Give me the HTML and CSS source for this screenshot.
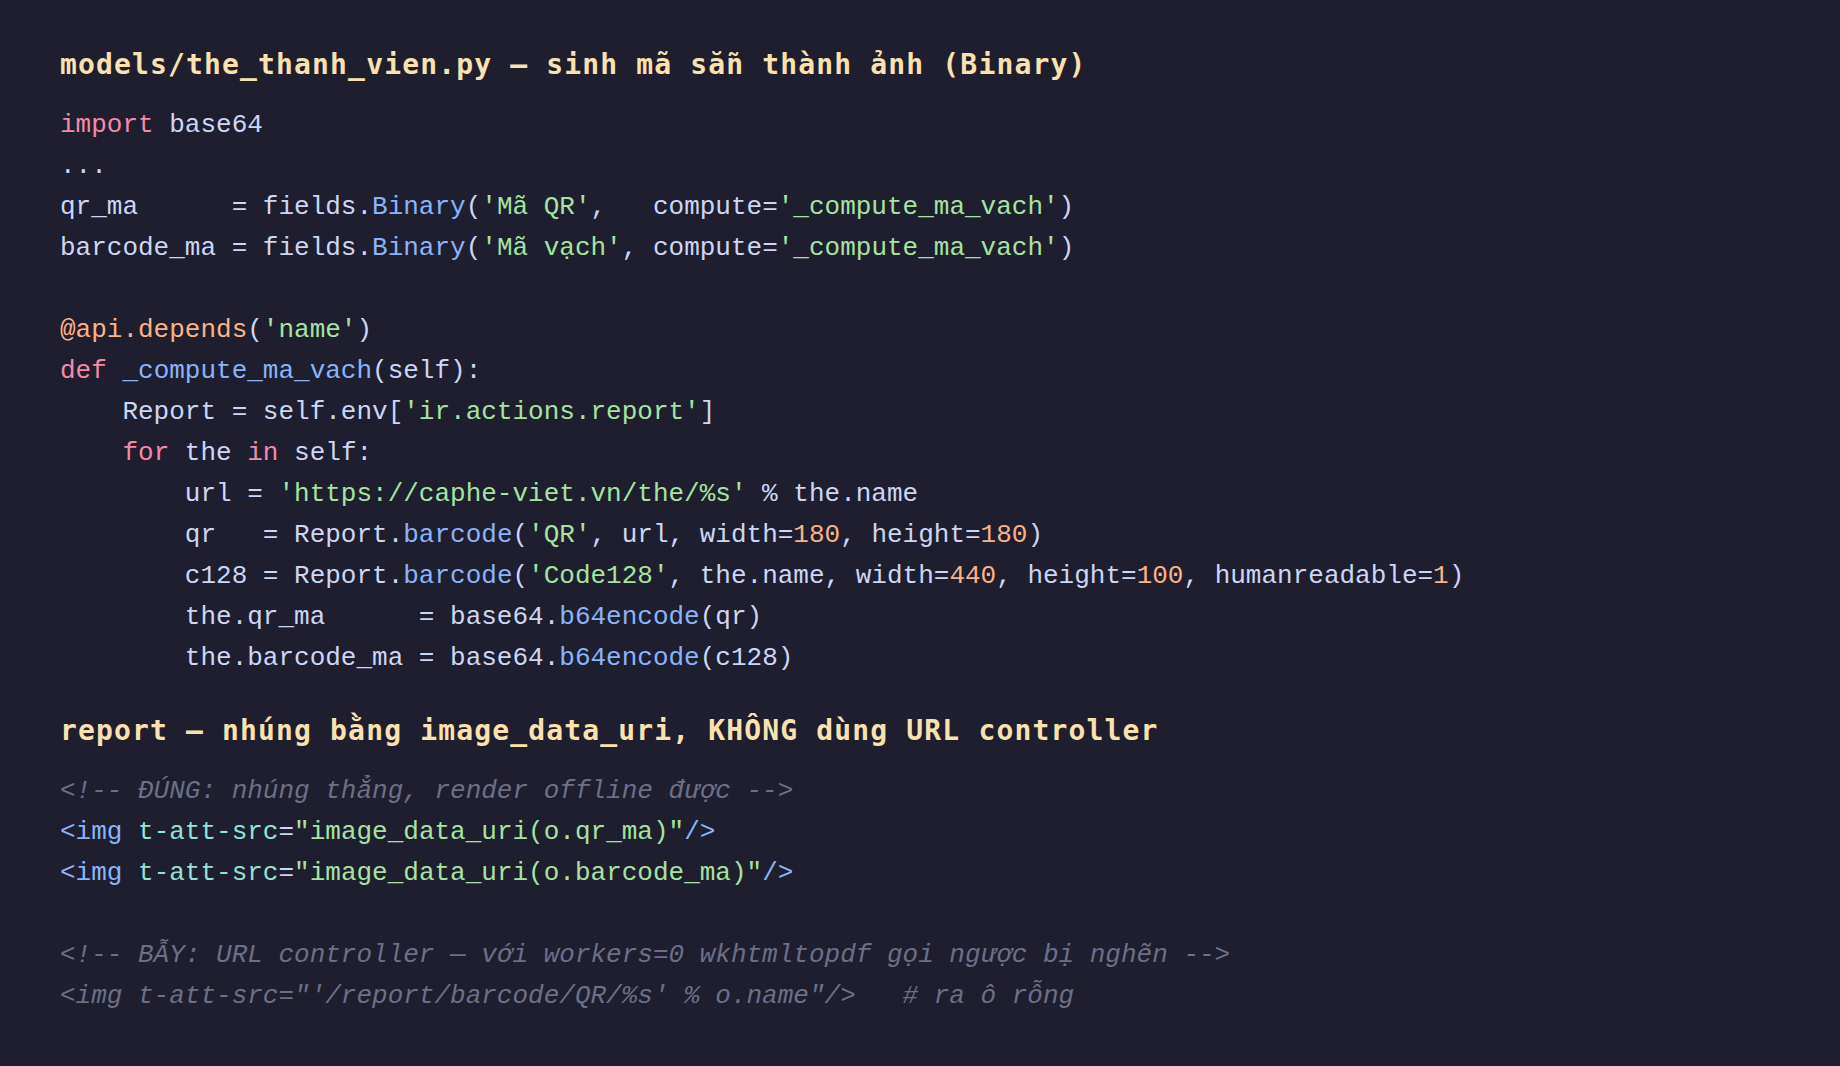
FILE: index.html
```html
<!DOCTYPE html>
<html lang="vi">
<head>
<meta charset="utf-8">
<title>the_thanh_vien</title>
<link rel="stylesheet" href="styles.css">
</head>
<body>
<main class="doc">
<h2 class="title">models/the_thanh_vien.py — sinh mã sẵn thành ảnh (Binary)</h2>
<pre class="code"><span class="kw">import</span> base64
...
qr_ma      = fields.<span class="fn">Binary</span>(<span class="str">'Mã QR'</span>,   compute=<span class="str">'_compute_ma_vach'</span>)
barcode_ma = fields.<span class="fn">Binary</span>(<span class="str">'Mã vạch'</span>, compute=<span class="str">'_compute_ma_vach'</span>)

<span class="deco">@api.depends</span>(<span class="str">'name'</span>)
<span class="kw">def</span> <span class="fn">_compute_ma_vach</span>(self):
    Report = self.env[<span class="str">'ir.actions.report'</span>]
    <span class="kw">for</span> the <span class="kw">in</span> self:
        url = <span class="str">'https://caphe-viet.vn/the/%s'</span> % the.name
        qr   = Report.<span class="fn">barcode</span>(<span class="str">'QR'</span>, url, width=<span class="num">180</span>, height=<span class="num">180</span>)
        c128 = Report.<span class="fn">barcode</span>(<span class="str">'Code128'</span>, the.name, width=<span class="num">440</span>, height=<span class="num">100</span>, humanreadable=<span class="num">1</span>)
        the.qr_ma      = base64.<span class="fn">b64encode</span>(qr)
        the.barcode_ma = base64.<span class="fn">b64encode</span>(c128)</pre>
<h2 class="title">report — nhúng bằng image_data_uri, KHÔNG dùng URL controller</h2>
<pre class="code"><span class="cm">&lt;!-- ĐÚNG: nhúng thẳng, render offline được --&gt;</span>
<span class="tag">&lt;img</span> <span class="attr">t-att-src</span>=<span class="str">"image_data_uri(o.qr_ma)"</span><span class="tag">/&gt;</span>
<span class="tag">&lt;img</span> <span class="attr">t-att-src</span>=<span class="str">"image_data_uri(o.barcode_ma)"</span><span class="tag">/&gt;</span>

<span class="cm">&lt;!-- BẪY: URL controller — với workers=0 wkhtmltopdf gọi ngược bị nghẽn --&gt;</span>
<span class="cm">&lt;img t-att-src="'/report/barcode/QR/%s' % o.name"/&gt;   # ra ô rỗng</span></pre>
</main>
</body>
</html>
```
FILE: styles.css
```css
html, body {
  margin: 0;
  padding: 0;
  background: #1e1e2e;
}

body {
  color: #cdd6f4;
  font-family: "Liberation Mono", "DejaVu Sans Mono", monospace;
}

.doc {
  padding: 45px 60px 40px;
}

.title {
  margin: 0 0 20px;
  font-family: "DejaVu Sans Mono", "Liberation Mono", monospace;
  font-weight: bold;
  font-size: 28px;
  letter-spacing: 1.15px;
  line-height: 40px;
  color: #f9e2af;
  white-space: pre;
}

.code {
  margin: 0 0 32px;
  font-family: "Liberation Mono", "DejaVu Sans Mono", monospace;
  font-size: 26px;
  line-height: 41px;
  color: #cdd6f4;
}

.kw { color: #f38ba8; }
.fn { color: #89b4fa; }
.str { color: #a6e3a1; }
.num { color: #fab387; }
.deco { color: #fab387; }
.tag { color: #89b4fa; }
.attr { color: #94e2d5; }
.cm { color: #6c7086; font-style: italic; }
```
